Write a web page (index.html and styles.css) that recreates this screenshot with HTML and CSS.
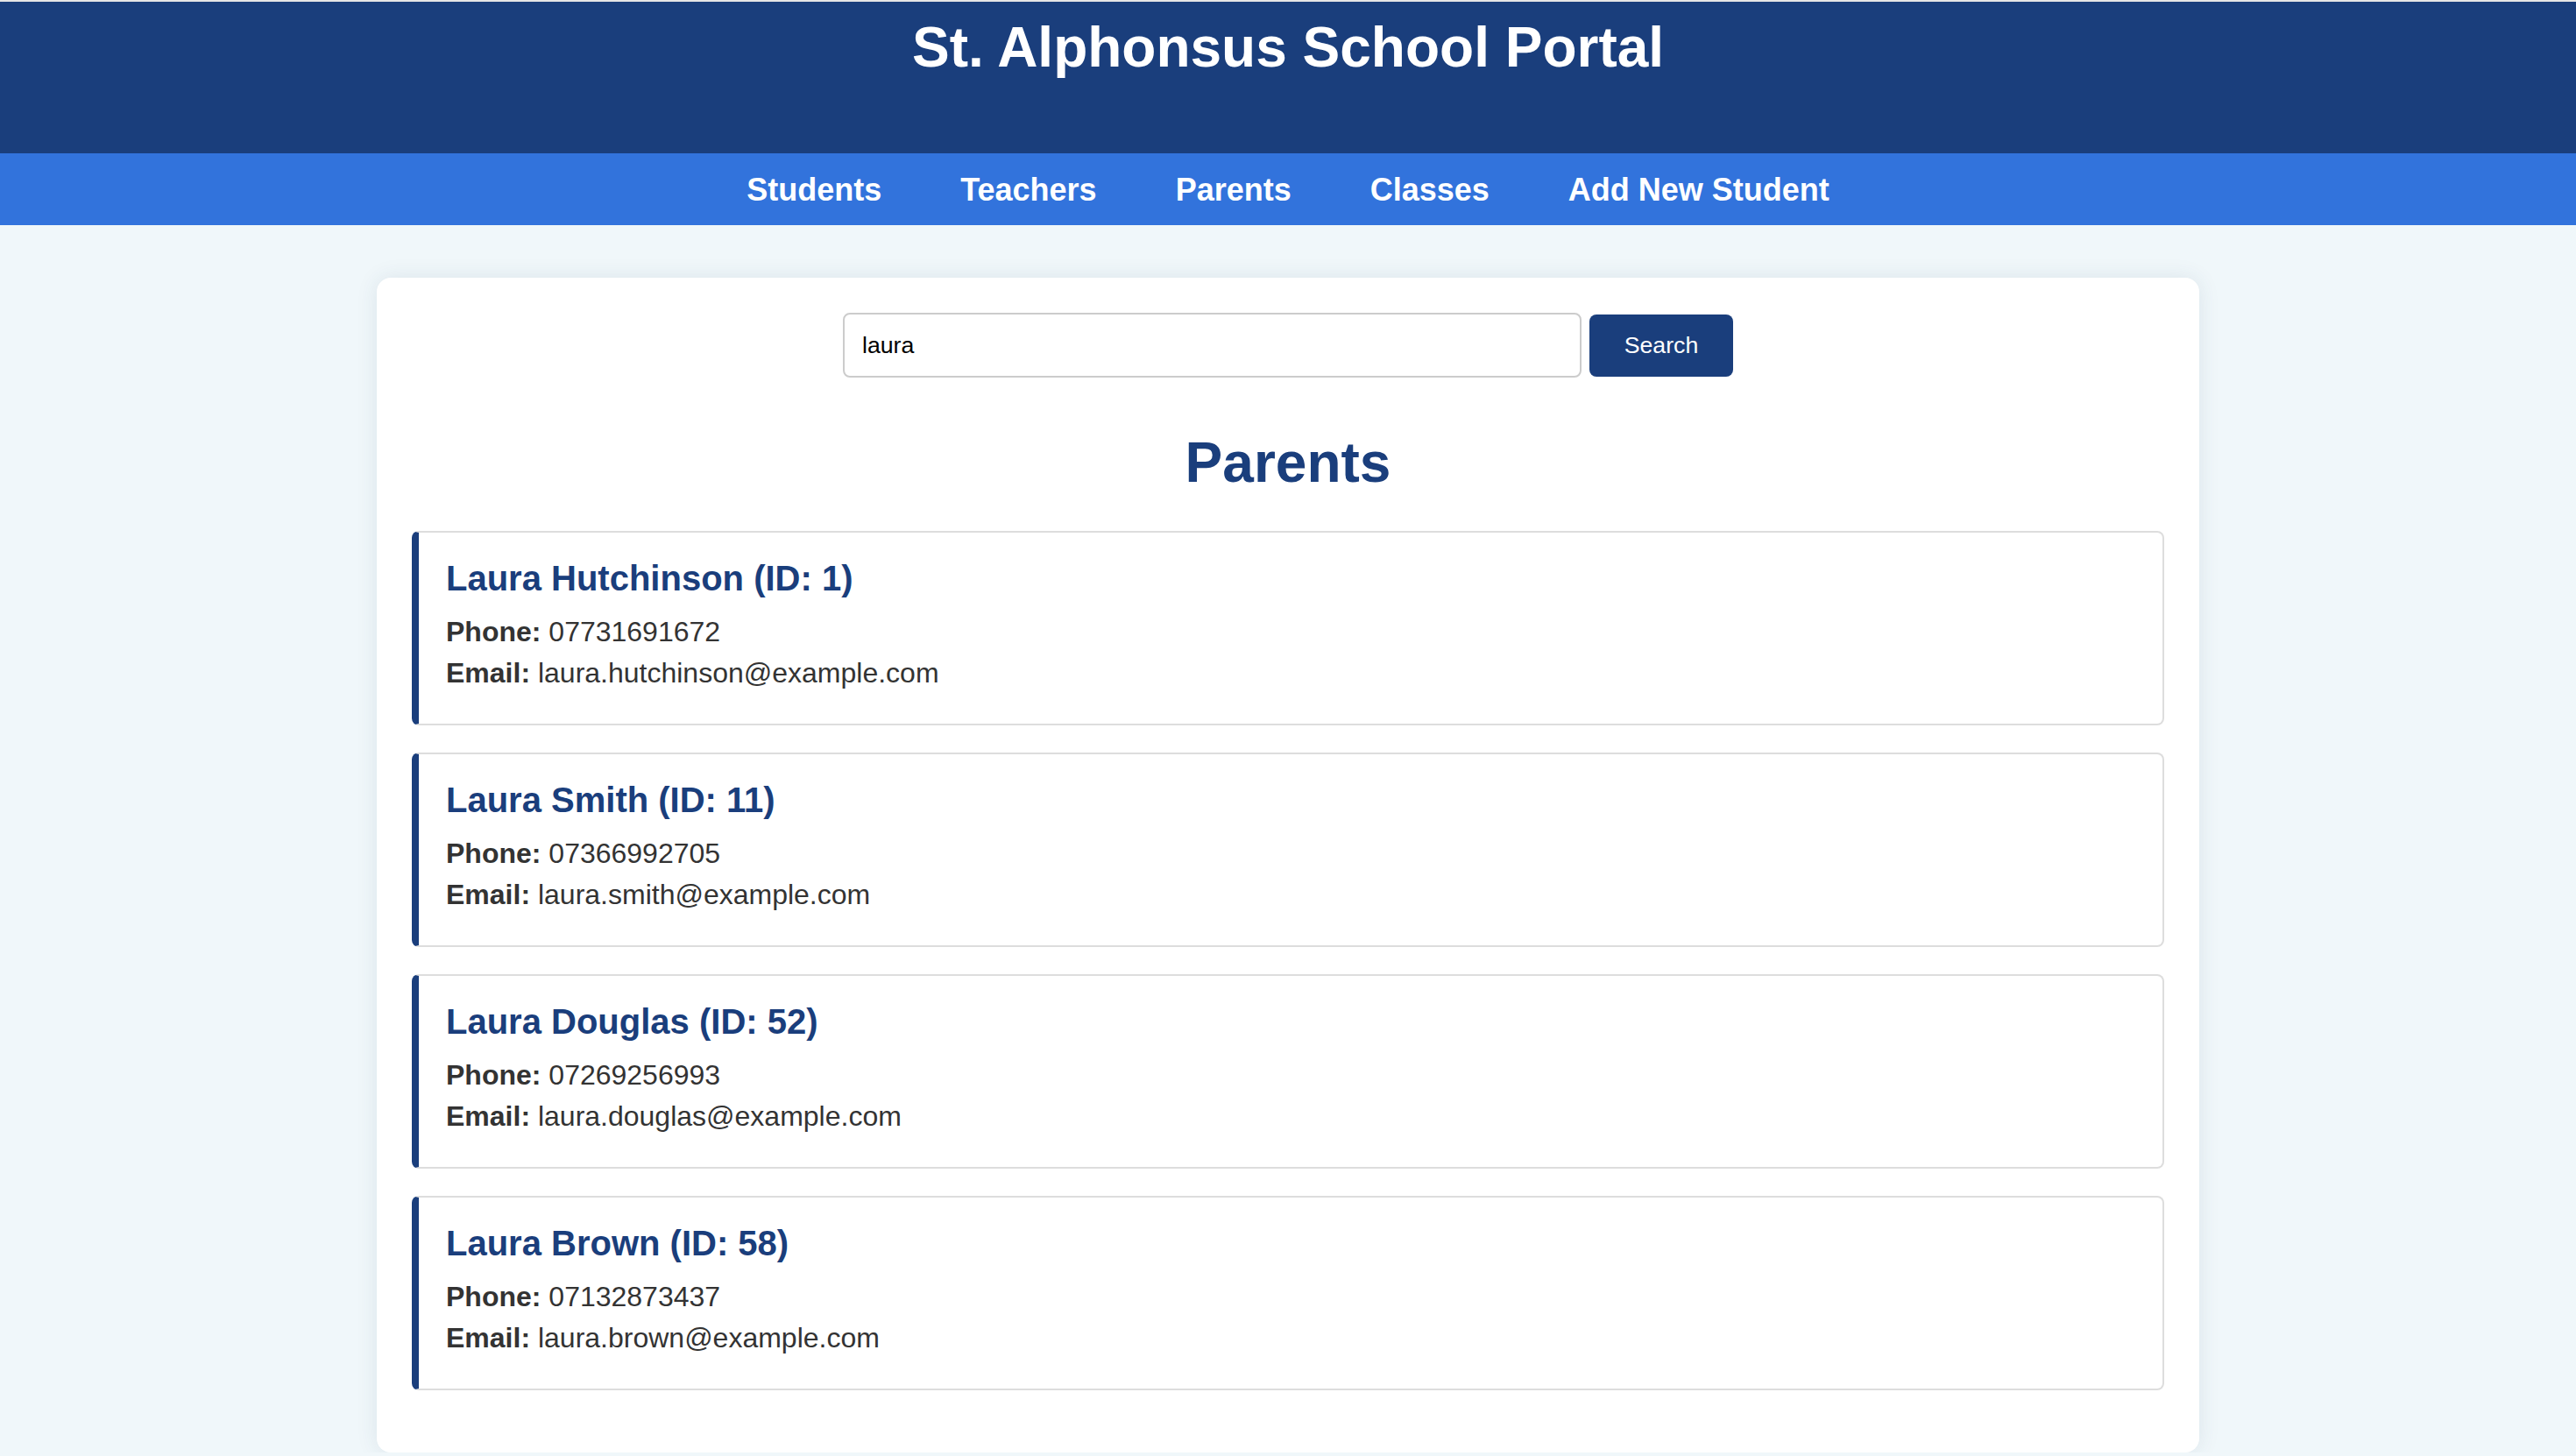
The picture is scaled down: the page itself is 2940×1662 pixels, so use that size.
FILE: index.html
```html
<!DOCTYPE html>
<html lang="en">
<head>
<meta charset="utf-8">
<title>St. Alphonsus School Portal</title>
<link rel="stylesheet" href="styles.css">
</head>
<body>
<header class="site-header">
  <h1 class="site-title">St. Alphonsus School Portal</h1>
</header>
<nav class="main-nav">
  <a href="#" class="nav-link">Students</a>
  <a href="#" class="nav-link">Teachers</a>
  <a href="#" class="nav-link">Parents</a>
  <a href="#" class="nav-link">Classes</a>
  <a href="#" class="nav-link">Add New Student</a>
</nav>
<main class="container">
  <form class="search-form">
    <input class="search-input" type="text" value="laura">
    <button class="search-button" type="button">Search</button>
  </form>
  <h2 class="section-title">Parents</h2>
  <div class="record">
    <h3 class="record-name">Laura Hutchinson (ID: 1)</h3>
    <p class="record-line"><strong>Phone:</strong> 07731691672</p>
    <p class="record-line"><strong>Email:</strong> laura.hutchinson@example.com</p>
  </div>
  <div class="record">
    <h3 class="record-name">Laura Smith (ID: 11)</h3>
    <p class="record-line"><strong>Phone:</strong> 07366992705</p>
    <p class="record-line"><strong>Email:</strong> laura.smith@example.com</p>
  </div>
  <div class="record">
    <h3 class="record-name">Laura Douglas (ID: 52)</h3>
    <p class="record-line"><strong>Phone:</strong> 07269256993</p>
    <p class="record-line"><strong>Email:</strong> laura.douglas@example.com</p>
  </div>
  <div class="record">
    <h3 class="record-name">Laura Brown (ID: 58)</h3>
    <p class="record-line"><strong>Phone:</strong> 07132873437</p>
    <p class="record-line"><strong>Email:</strong> laura.brown@example.com</p>
  </div>
</main>
</body>
</html>
```

FILE: styles.css
```css
* {
  box-sizing: border-box;
}

body {
  margin: 0;
  background: #f0f7fa;
  border-top: 2px solid #e6e6e6;
  font-family: "Liberation Sans", Arial, sans-serif;
  color: #333;
}

.site-header {
  background: #1a3e7c;
  height: 173px;
  padding-top: 15px;
  text-align: center;
}

.site-title {
  margin: 0;
  font-size: 64px;
  line-height: 74px;
  font-weight: bold;
  color: #fff;
}

.main-nav {
  background: #3273dc;
  height: 82px;
  padding-top: 21px;
  display: flex;
  justify-content: center;
  gap: 90px;
}

.nav-link {
  color: #fff;
  text-decoration: none;
  font-weight: bold;
  font-size: 36px;
  line-height: 41px;
}

.container {
  width: 2080px;
  margin: 60px auto 0;
  padding: 40px;
  background: #fff;
  border-radius: 16px;
  box-shadow: 0 0 24px rgba(40, 70, 100, 0.10);
}

.search-form {
  display: flex;
  justify-content: center;
  align-items: center;
  gap: 9px;
  margin: 0;
}

.search-input {
  width: 843px;
  height: 74px;
  padding: 0 20px;
  border: 2px solid #ccc;
  border-radius: 8px;
  font-family: "Liberation Sans", Arial, sans-serif;
  font-size: 26.67px;
  color: #000;
  background: #fff;
}

.search-button {
  width: 164px;
  height: 71px;
  border: none;
  border-radius: 8px;
  background: #1a3e7c;
  color: #fff;
  font-family: "Liberation Sans", Arial, sans-serif;
  font-size: 26.67px;
  padding: 0;
}

.section-title {
  margin: 60px 0 41px;
  text-align: center;
  font-size: 64px;
  line-height: 74px;
  font-weight: bold;
  color: #1a3e7c;
}

.record {
  border: 2px solid #ddd;
  border-left: 8px solid #1a3e7c;
  border-radius: 8px;
  padding: 29px 30px 29px 31px;
  margin-bottom: 31px;
}

.record-name {
  margin: 0 0 20px;
  font-size: 40px;
  line-height: 46px;
  font-weight: bold;
  color: #1a3e7c;
}

.record-line {
  margin: 10px 0;
  font-size: 32px;
  line-height: 37px;
  color: #333;
}

.record-line strong {
  font-weight: bold;
}
```
